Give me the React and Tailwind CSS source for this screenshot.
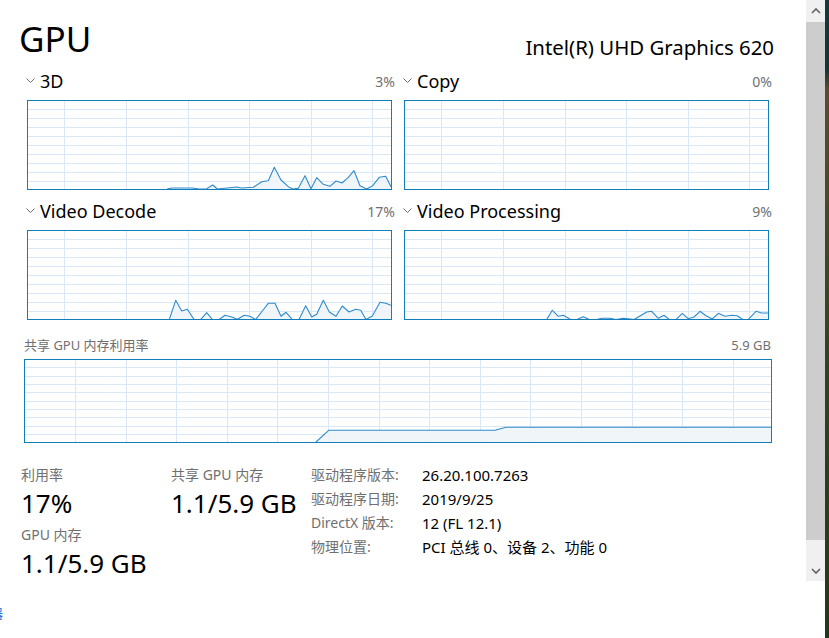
import React from "react";

const D3 = [[140,89],[145,88],[165,88],[172,89],[179.7,88.7],[185.7,85],[190.3,89],[209.7,87],[214.7,88],[226.3,87.3],[234.7,81.7],[241.3,80.7],[247.3,67.3],[254,80],[261.3,86.7],[265.7,89],[271.3,88.3],[278,75.7],[284,88.7],[289.7,77.7],[296.3,84.3],[303,86.3],[309,81],[315,83],[321.3,77.3],[327,70.7],[333,85.7],[339.7,89],[345.7,85.7],[352.3,77.3],[358.7,76.3],[364,86.7]];
const VD = [[142.3,89.5],[148.7,70.3],[154.7,81],[160.3,79.3],[167,89.3],[173.7,89.5],[179.7,82.7],[185.3,89.3],[192,89.5],[198,85.3],[204.7,87],[210.3,89.3],[217.3,85.3],[223,86.3],[228.7,89.5],[235.3,81],[241.3,73.3],[248,73.3],[254,86.3],[259,82.3],[265.3,89.5],[272,89.5],[278.7,75.7],[284.7,87],[289.7,84.3],[296.3,70.3],[302.3,82],[309,86.3],[315.3,76],[322,82],[328.7,79.3],[333.7,80.3],[339,89.5],[345.3,86],[353,72.3],[358.7,73.3],[364,75.3]];
const VP = [[142.7,89.5],[148.3,80.3],[154.3,86.3],[159.3,85.3],[166.7,89.5],[172.7,89.5],[179.3,86.7],[185.3,89.5],[192.7,89.5],[197.7,88.3],[206,88.3],[212,89.5],[219.3,88.3],[224.3,88.7],[230,89.5],[236,86],[242.7,82],[247.7,81.3],[254.3,88.3],[260,85.3],[265.3,89.5],[272,89.5],[278.3,83.3],[284.3,88.7],[290,87],[296,81.3],[302,85.7],[308.3,89],[314.3,83.3],[321,86.3],[327.7,85.3],[333.3,85.7],[338.7,89.5],[344.3,89.3],[352,81.3],[357.7,83],[364,83]];
const SH = [[292,83],[304.7,71.3],[471,71.3],[482,68.3],[748,68.3]];

function Chev() {
  return (
    <svg width="9" height="6" viewBox="0 0 9 6" className="block">
      <polyline points="0.5,0.5 4.5,4.5 8.5,0.5" fill="none" stroke="#6d6d6d" strokeWidth="1" />
    </svg>
  );
}

function Chart({ data, w, h, hStep, hCount, vStart, vStep, vCount }) {
  const hs = Array.from({ length: hCount }, (_, k) => Math.round(hStep * (k + 1)) + 0.5);
  const vs = Array.from({ length: vCount }, (_, k) => Math.round(vStart + vStep * k) + 0.5);
  const pts = data ? data.map(([x, y]) => `${x},${y}`).join(" ") : "";
  return (
    <div className="border border-[#117dbb] bg-white" style={{ width: w, height: h }}>
      <svg width={w - 2} height={h - 2} viewBox={`1 1 ${w - 2} ${h - 2}`} className="block">
        {hs.map((y) => (
          <line key={"h" + y} x1="0" x2={w} y1={y} y2={y} stroke="#d9e8f4" strokeWidth="1" />
        ))}
        {vs.map((x) => (
          <line key={"v" + x} x1={x} x2={x} y1="0" y2={h} stroke="#d9e8f4" strokeWidth="1" />
        ))}
        {data && (
          <>
            <polygon points={`${data[0][0]},${h} ${pts} ${data[data.length - 1][0]},${h}`} fill="#eef4fa" fillOpacity="0.9" />
            <polyline points={pts} fill="none" stroke="#2f8bcb" strokeWidth="1.1" strokeLinejoin="round" />
          </>
        )}
      </svg>
    </div>
  );
}

function Small({ label, pct, data }) {
  return (
    <div className="flex flex-col w-[369px]">
      <div className="flex items-center h-[28px]">
        <div className="w-[14px]"><Chev /></div>
        <div className="text-[18px] leading-[28px] text-black">{label}</div>
        <div className="ml-auto text-[14px] text-[#707070]">{pct}</div>
      </div>
      <div className="mt-[5px] pl-[1px]">
        <Chart data={data} w={365} h={90} hStep={9} hCount={9} vStart={37.3} vStep={61.6} vCount={6} />
      </div>
    </div>
  );
}

export default function App() {
  return (
    <div className="flex h-[638px] w-[829px] overflow-hidden bg-white font-['Noto_Sans','Noto_Sans_CJK_SC',sans-serif]">
      <div className="w-[806px] flex flex-col">
        <div className="flex items-end justify-between pl-[19px] pr-[32px] h-[61px]">
          <div className="text-[35px] leading-[44px] text-black">GPU</div>
          <div className="text-[20.4px] leading-[28px] text-black">Intel(R) UHD Graphics 620</div>
        </div>
        <div className="grid grid-cols-[369px_369px] gap-x-[8px] gap-y-[7px] pl-[26px] mt-[6px]">
          <Small label="3D" pct="3%" data={D3} />
          <Small label="Copy" pct="0%" data={null} />
          <Small label="Video Decode" pct="17%" data={VD} />
          <Small label="Video Processing" pct="9%" data={VP} />
        </div>
        <div className="flex flex-col pl-[24px] w-[771px] mt-[16px]">
          <div className="flex items-center h-[20px] text-[13px] text-[#707070]">
            <span>共享 GPU 内存利用率</span>
            <span className="ml-auto">5.9 GB</span>
          </div>
          <div className="mt-[3px]">
            <Chart data={SH} w={748} h={84} hStep={8.35} hCount={9} vStart={51} vStep={50.6} vCount={14} />
          </div>
        </div>
        <div className="flex pl-[21px] mt-[20px]">
          <div className="w-[150px] flex flex-col">
            <div className="text-[14px] leading-[24px] text-[#707070]">利用率</div>
            <div className="text-[26px] leading-[32px] text-black">17%</div>
            <div className="text-[14px] leading-[24px] text-[#707070] mt-[4px]">GPU 内存</div>
            <div className="text-[26px] leading-[32px] text-black">1.1/5.9 GB</div>
          </div>
          <div className="w-[140px] flex flex-col">
            <div className="text-[14px] leading-[24px] text-[#707070]">共享 GPU 内存</div>
            <div className="text-[26px] leading-[32px] text-black">1.1/5.9 GB</div>
          </div>
          <div className="grid grid-cols-[111px_auto] auto-rows-[24px] leading-[24px]">
            <div className="text-[14px] text-[#707070]">驱动程序版本:</div>
            <div className="text-[15px] text-black">26.20.100.7263</div>
            <div className="text-[14px] text-[#707070]">驱动程序日期:</div>
            <div className="text-[15px] text-black">2019/9/25</div>
            <div className="text-[14px] text-[#707070]">DirectX 版本:</div>
            <div className="text-[15px] text-black">12 (FL 12.1)</div>
            <div className="text-[14px] text-[#707070]">物理位置:</div>
            <div className="text-[15px] text-black">PCI 总线 0、设备 2、功能 0</div>
          </div>
        </div>
        <div className="mt-[24px] h-[20px] text-[13px] leading-[20px] text-[#1a6fd6] ml-[-10px]">器</div>
      </div>
      <div className="w-[19px] flex flex-col">
        <div className="h-[581px] flex flex-col bg-[#f0f0f0]">
          <div className="h-[22px] flex items-center justify-center">
            <svg width="10" height="6" viewBox="0 0 10 6" className="block">
              <polyline points="1,5 5,1 9,5" fill="none" stroke="#606060" strokeWidth="1.6" />
            </svg>
          </div>
          <div className="h-[518px] bg-[#cdcdcd]" />
          <div className="h-[20px]" />
          <div className="h-[21px] flex items-center justify-center">
            <svg width="10" height="6" viewBox="0 0 10 6" className="block">
              <polyline points="1,1 5,5 9,1" fill="none" stroke="#606060" strokeWidth="1.6" />
            </svg>
          </div>
        </div>
      </div>
      <div className="w-[4px] bg-[linear-gradient(to_bottom,#123a3c_0%,#153633_11%,#5b4b2e_14%,#4a4a26_30%,#2f4420_55%,#22381a_100%)]" />
    </div>
  );
}
